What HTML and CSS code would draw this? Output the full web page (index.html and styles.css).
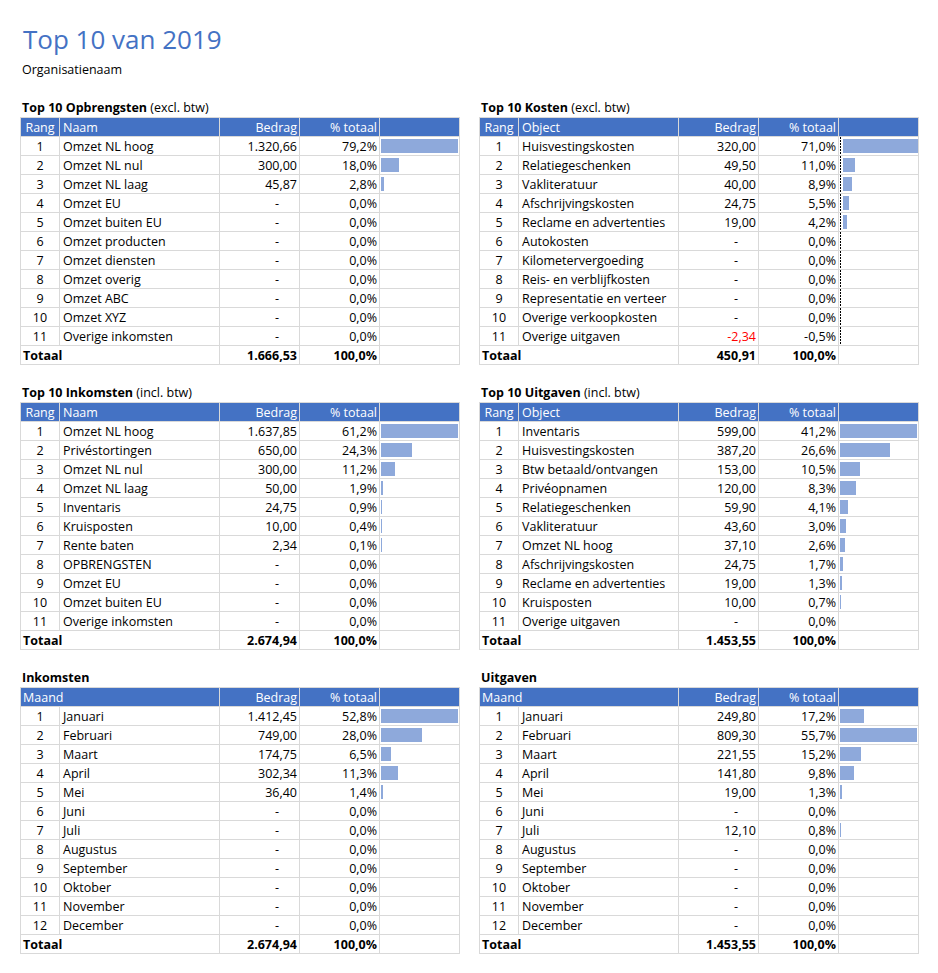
FILE: index.html
```html
<!DOCTYPE html>
<html lang="nl">
<head>
<meta charset="utf-8">
<title>Top 10 van 2019</title>
<link rel="stylesheet" href="styles.css">
</head>
<body>
<div class="page">
  <h1 class="title">Top 10 van 2019</h1>
  <div class="org">Organisatienaam</div>
  <div class="grid">

    <section class="section">
      <h2 class="heading">Top 10 Opbrengsten <span class="sub">(excl. btw)</span></h2>
      <table class="tbl">
        <colgroup><col class="c-rang"><col class="c-naam"><col class="c-num"><col class="c-num"><col class="c-bar"></colgroup>
        <thead><tr><th class="rang">Rang</th><th class="naam">Naam</th><th class="num">Bedrag</th><th class="num">% totaal</th><th></th></tr></thead>
        <tbody>
          <tr><td class="rang">1</td><td class="naam">Omzet NL hoog</td><td class="num">1.320,66</td><td class="num">79,2%</td><td class="barcell"><div class="bar" style="width:77px"></div></td></tr>
          <tr><td class="rang">2</td><td class="naam">Omzet NL nul</td><td class="num">300,00</td><td class="num">18,0%</td><td class="barcell"><div class="bar" style="width:17.5px"></div></td></tr>
          <tr><td class="rang">3</td><td class="naam">Omzet NL laag</td><td class="num">45,87</td><td class="num">2,8%</td><td class="barcell"><div class="bar" style="width:2.7px"></div></td></tr>
          <tr><td class="rang">4</td><td class="naam">Omzet EU</td><td class="num dash">-</td><td class="num">0,0%</td><td class="barcell"></td></tr>
          <tr><td class="rang">5</td><td class="naam">Omzet buiten EU</td><td class="num dash">-</td><td class="num">0,0%</td><td class="barcell"></td></tr>
          <tr><td class="rang">6</td><td class="naam">Omzet producten</td><td class="num dash">-</td><td class="num">0,0%</td><td class="barcell"></td></tr>
          <tr><td class="rang">7</td><td class="naam">Omzet diensten</td><td class="num dash">-</td><td class="num">0,0%</td><td class="barcell"></td></tr>
          <tr><td class="rang">8</td><td class="naam">Omzet overig</td><td class="num dash">-</td><td class="num">0,0%</td><td class="barcell"></td></tr>
          <tr><td class="rang">9</td><td class="naam">Omzet ABC</td><td class="num dash">-</td><td class="num">0,0%</td><td class="barcell"></td></tr>
          <tr><td class="rang">10</td><td class="naam">Omzet XYZ</td><td class="num dash">-</td><td class="num">0,0%</td><td class="barcell"></td></tr>
          <tr><td class="rang">11</td><td class="naam">Overige inkomsten</td><td class="num dash">-</td><td class="num">0,0%</td><td class="barcell"></td></tr>
        </tbody>
        <tfoot><tr><td colspan="2" class="tot-label">Totaal</td><td class="num">1.666,53</td><td class="num">100,0%</td><td></td></tr></tfoot>
      </table>
    </section>

    <section class="section">
      <h2 class="heading">Top 10 Kosten <span class="sub">(excl. btw)</span></h2>
      <table class="tbl">
        <colgroup><col class="c-rang"><col class="c-naam"><col class="c-num"><col class="c-num"><col class="c-bar"></colgroup>
        <thead><tr><th class="rang">Rang</th><th class="naam">Object</th><th class="num">Bedrag</th><th class="num">% totaal</th><th></th></tr></thead>
        <tbody class="axis-body">
          <tr><td class="rang">1</td><td class="naam">Huisvestingskosten</td><td class="num">320,00</td><td class="num">71,0%</td><td class="barcell axis"><div class="axisline"></div><div class="bar" style="width:75px"></div></td></tr>
          <tr><td class="rang">2</td><td class="naam">Relatiegeschenken</td><td class="num">49,50</td><td class="num">11,0%</td><td class="barcell axis"><div class="axisline"></div><div class="bar" style="width:11.6px"></div></td></tr>
          <tr><td class="rang">3</td><td class="naam">Vakliteratuur</td><td class="num">40,00</td><td class="num">8,9%</td><td class="barcell axis"><div class="axisline"></div><div class="bar" style="width:9.4px"></div></td></tr>
          <tr><td class="rang">4</td><td class="naam">Afschrijvingskosten</td><td class="num">24,75</td><td class="num">5,5%</td><td class="barcell axis"><div class="axisline"></div><div class="bar" style="width:5.8px"></div></td></tr>
          <tr><td class="rang">5</td><td class="naam">Reclame en advertenties</td><td class="num">19,00</td><td class="num">4,2%</td><td class="barcell axis"><div class="axisline"></div><div class="bar" style="width:4.4px"></div></td></tr>
          <tr><td class="rang">6</td><td class="naam">Autokosten</td><td class="num dash">-</td><td class="num">0,0%</td><td class="barcell axis"><div class="axisline"></div></td></tr>
          <tr><td class="rang">7</td><td class="naam">Kilometervergoeding</td><td class="num dash">-</td><td class="num">0,0%</td><td class="barcell axis"><div class="axisline"></div></td></tr>
          <tr><td class="rang">8</td><td class="naam">Reis- en verblijfkosten</td><td class="num dash">-</td><td class="num">0,0%</td><td class="barcell axis"><div class="axisline"></div></td></tr>
          <tr><td class="rang">9</td><td class="naam">Representatie en verteer</td><td class="num dash">-</td><td class="num">0,0%</td><td class="barcell axis"><div class="axisline"></div></td></tr>
          <tr><td class="rang">10</td><td class="naam">Overige verkoopkosten</td><td class="num dash">-</td><td class="num">0,0%</td><td class="barcell axis"><div class="axisline"></div></td></tr>
          <tr><td class="rang">11</td><td class="naam">Overige uitgaven</td><td class="num neg">-2,34</td><td class="num">-0,5%</td><td class="barcell axis"><div class="axisline"></div></td></tr>
        </tbody>
        <tfoot><tr><td colspan="2" class="tot-label">Totaal</td><td class="num">450,91</td><td class="num">100,0%</td><td></td></tr></tfoot>
      </table>
    </section>

    <section class="section">
      <h2 class="heading">Top 10 Inkomsten <span class="sub">(incl. btw)</span></h2>
      <table class="tbl">
        <colgroup><col class="c-rang"><col class="c-naam"><col class="c-num"><col class="c-num"><col class="c-bar"></colgroup>
        <thead><tr><th class="rang">Rang</th><th class="naam">Naam</th><th class="num">Bedrag</th><th class="num">% totaal</th><th></th></tr></thead>
        <tbody>
          <tr><td class="rang">1</td><td class="naam">Omzet NL hoog</td><td class="num">1.637,85</td><td class="num">61,2%</td><td class="barcell"><div class="bar" style="width:77px"></div></td></tr>
          <tr><td class="rang">2</td><td class="naam">Privéstortingen</td><td class="num">650,00</td><td class="num">24,3%</td><td class="barcell"><div class="bar" style="width:30.6px"></div></td></tr>
          <tr><td class="rang">3</td><td class="naam">Omzet NL nul</td><td class="num">300,00</td><td class="num">11,2%</td><td class="barcell"><div class="bar" style="width:14.1px"></div></td></tr>
          <tr><td class="rang">4</td><td class="naam">Omzet NL laag</td><td class="num">50,00</td><td class="num">1,9%</td><td class="barcell"><div class="bar" style="width:2.4px"></div></td></tr>
          <tr><td class="rang">5</td><td class="naam">Inventaris</td><td class="num">24,75</td><td class="num">0,9%</td><td class="barcell"><div class="bar" style="width:1.1px"></div></td></tr>
          <tr><td class="rang">6</td><td class="naam">Kruisposten</td><td class="num">10,00</td><td class="num">0,4%</td><td class="barcell"><div class="bar" style="width:0.5px"></div></td></tr>
          <tr><td class="rang">7</td><td class="naam">Rente baten</td><td class="num">2,34</td><td class="num">0,1%</td><td class="barcell"><div class="bar" style="width:0.15px"></div></td></tr>
          <tr><td class="rang">8</td><td class="naam">OPBRENGSTEN</td><td class="num dash">-</td><td class="num">0,0%</td><td class="barcell"></td></tr>
          <tr><td class="rang">9</td><td class="naam">Omzet EU</td><td class="num dash">-</td><td class="num">0,0%</td><td class="barcell"></td></tr>
          <tr><td class="rang">10</td><td class="naam">Omzet buiten EU</td><td class="num dash">-</td><td class="num">0,0%</td><td class="barcell"></td></tr>
          <tr><td class="rang">11</td><td class="naam">Overige inkomsten</td><td class="num dash">-</td><td class="num">0,0%</td><td class="barcell"></td></tr>
        </tbody>
        <tfoot><tr><td colspan="2" class="tot-label">Totaal</td><td class="num">2.674,94</td><td class="num">100,0%</td><td></td></tr></tfoot>
      </table>
    </section>

    <section class="section">
      <h2 class="heading">Top 10 Uitgaven <span class="sub">(incl. btw)</span></h2>
      <table class="tbl">
        <colgroup><col class="c-rang"><col class="c-naam"><col class="c-num"><col class="c-num"><col class="c-bar"></colgroup>
        <thead><tr><th class="rang">Rang</th><th class="naam">Object</th><th class="num">Bedrag</th><th class="num">% totaal</th><th></th></tr></thead>
        <tbody>
          <tr><td class="rang">1</td><td class="naam">Inventaris</td><td class="num">599,00</td><td class="num">41,2%</td><td class="barcell"><div class="bar" style="width:77px"></div></td></tr>
          <tr><td class="rang">2</td><td class="naam">Huisvestingskosten</td><td class="num">387,20</td><td class="num">26,6%</td><td class="barcell"><div class="bar" style="width:49.7px"></div></td></tr>
          <tr><td class="rang">3</td><td class="naam">Btw betaald/ontvangen</td><td class="num">153,00</td><td class="num">10,5%</td><td class="barcell"><div class="bar" style="width:19.6px"></div></td></tr>
          <tr><td class="rang">4</td><td class="naam">Privéopnamen</td><td class="num">120,00</td><td class="num">8,3%</td><td class="barcell"><div class="bar" style="width:15.5px"></div></td></tr>
          <tr><td class="rang">5</td><td class="naam">Relatiegeschenken</td><td class="num">59,90</td><td class="num">4,1%</td><td class="barcell"><div class="bar" style="width:7.7px"></div></td></tr>
          <tr><td class="rang">6</td><td class="naam">Vakliteratuur</td><td class="num">43,60</td><td class="num">3,0%</td><td class="barcell"><div class="bar" style="width:5.6px"></div></td></tr>
          <tr><td class="rang">7</td><td class="naam">Omzet NL hoog</td><td class="num">37,10</td><td class="num">2,6%</td><td class="barcell"><div class="bar" style="width:4.9px"></div></td></tr>
          <tr><td class="rang">8</td><td class="naam">Afschrijvingskosten</td><td class="num">24,75</td><td class="num">1,7%</td><td class="barcell"><div class="bar" style="width:3.2px"></div></td></tr>
          <tr><td class="rang">9</td><td class="naam">Reclame en advertenties</td><td class="num">19,00</td><td class="num">1,3%</td><td class="barcell"><div class="bar" style="width:2.4px"></div></td></tr>
          <tr><td class="rang">10</td><td class="naam">Kruisposten</td><td class="num">10,00</td><td class="num">0,7%</td><td class="barcell"><div class="bar" style="width:1.3px"></div></td></tr>
          <tr><td class="rang">11</td><td class="naam">Overige uitgaven</td><td class="num dash">-</td><td class="num">0,0%</td><td class="barcell"></td></tr>
        </tbody>
        <tfoot><tr><td colspan="2" class="tot-label">Totaal</td><td class="num">1.453,55</td><td class="num">100,0%</td><td></td></tr></tfoot>
      </table>
    </section>

    <section class="section">
      <h2 class="heading">Inkomsten</h2>
      <table class="tbl">
        <colgroup><col class="c-rang"><col class="c-naam"><col class="c-num"><col class="c-num"><col class="c-bar"></colgroup>
        <thead><tr><th colspan="2" class="maand">Maand</th><th class="num">Bedrag</th><th class="num">% totaal</th><th></th></tr></thead>
        <tbody>
          <tr><td class="rang">1</td><td class="naam">Januari</td><td class="num">1.412,45</td><td class="num">52,8%</td><td class="barcell"><div class="bar" style="width:77px"></div></td></tr>
          <tr><td class="rang">2</td><td class="naam">Februari</td><td class="num">749,00</td><td class="num">28,0%</td><td class="barcell"><div class="bar" style="width:40.8px"></div></td></tr>
          <tr><td class="rang">3</td><td class="naam">Maart</td><td class="num">174,75</td><td class="num">6,5%</td><td class="barcell"><div class="bar" style="width:9.5px"></div></td></tr>
          <tr><td class="rang">4</td><td class="naam">April</td><td class="num">302,34</td><td class="num">11,3%</td><td class="barcell"><div class="bar" style="width:16.5px"></div></td></tr>
          <tr><td class="rang">5</td><td class="naam">Mei</td><td class="num">36,40</td><td class="num">1,4%</td><td class="barcell"><div class="bar" style="width:2px"></div></td></tr>
          <tr><td class="rang">6</td><td class="naam">Juni</td><td class="num dash">-</td><td class="num">0,0%</td><td class="barcell"></td></tr>
          <tr><td class="rang">7</td><td class="naam">Juli</td><td class="num dash">-</td><td class="num">0,0%</td><td class="barcell"></td></tr>
          <tr><td class="rang">8</td><td class="naam">Augustus</td><td class="num dash">-</td><td class="num">0,0%</td><td class="barcell"></td></tr>
          <tr><td class="rang">9</td><td class="naam">September</td><td class="num dash">-</td><td class="num">0,0%</td><td class="barcell"></td></tr>
          <tr><td class="rang">10</td><td class="naam">Oktober</td><td class="num dash">-</td><td class="num">0,0%</td><td class="barcell"></td></tr>
          <tr><td class="rang">11</td><td class="naam">November</td><td class="num dash">-</td><td class="num">0,0%</td><td class="barcell"></td></tr>
          <tr><td class="rang">12</td><td class="naam">December</td><td class="num dash">-</td><td class="num">0,0%</td><td class="barcell"></td></tr>
        </tbody>
        <tfoot><tr><td colspan="2" class="tot-label">Totaal</td><td class="num">2.674,94</td><td class="num">100,0%</td><td></td></tr></tfoot>
      </table>
    </section>

    <section class="section">
      <h2 class="heading">Uitgaven</h2>
      <table class="tbl">
        <colgroup><col class="c-rang"><col class="c-naam"><col class="c-num"><col class="c-num"><col class="c-bar"></colgroup>
        <thead><tr><th colspan="2" class="maand">Maand</th><th class="num">Bedrag</th><th class="num">% totaal</th><th></th></tr></thead>
        <tbody>
          <tr><td class="rang">1</td><td class="naam">Januari</td><td class="num">249,80</td><td class="num">17,2%</td><td class="barcell"><div class="bar" style="width:23.8px"></div></td></tr>
          <tr><td class="rang">2</td><td class="naam">Februari</td><td class="num">809,30</td><td class="num">55,7%</td><td class="barcell"><div class="bar" style="width:77px"></div></td></tr>
          <tr><td class="rang">3</td><td class="naam">Maart</td><td class="num">221,55</td><td class="num">15,2%</td><td class="barcell"><div class="bar" style="width:21px"></div></td></tr>
          <tr><td class="rang">4</td><td class="naam">April</td><td class="num">141,80</td><td class="num">9,8%</td><td class="barcell"><div class="bar" style="width:13.5px"></div></td></tr>
          <tr><td class="rang">5</td><td class="naam">Mei</td><td class="num">19,00</td><td class="num">1,3%</td><td class="barcell"><div class="bar" style="width:1.8px"></div></td></tr>
          <tr><td class="rang">6</td><td class="naam">Juni</td><td class="num dash">-</td><td class="num">0,0%</td><td class="barcell"></td></tr>
          <tr><td class="rang">7</td><td class="naam">Juli</td><td class="num">12,10</td><td class="num">0,8%</td><td class="barcell"><div class="bar" style="width:1.1px"></div></td></tr>
          <tr><td class="rang">8</td><td class="naam">Augustus</td><td class="num dash">-</td><td class="num">0,0%</td><td class="barcell"></td></tr>
          <tr><td class="rang">9</td><td class="naam">September</td><td class="num dash">-</td><td class="num">0,0%</td><td class="barcell"></td></tr>
          <tr><td class="rang">10</td><td class="naam">Oktober</td><td class="num dash">-</td><td class="num">0,0%</td><td class="barcell"></td></tr>
          <tr><td class="rang">11</td><td class="naam">November</td><td class="num dash">-</td><td class="num">0,0%</td><td class="barcell"></td></tr>
          <tr><td class="rang">12</td><td class="naam">December</td><td class="num dash">-</td><td class="num">0,0%</td><td class="barcell"></td></tr>
        </tbody>
        <tfoot><tr><td colspan="2" class="tot-label">Totaal</td><td class="num">1.453,55</td><td class="num">100,0%</td><td></td></tr></tfoot>
      </table>
    </section>

  </div>
</div>
</body>
</html>
```

FILE: styles.css
```css
* { box-sizing: border-box; }

body {
  margin: 0;
  background: #fff;
  color: #000;
  font-family: "Open Sans", "Noto Sans", sans-serif;
  font-size: 12.5px;
}

.page {
  padding: 22px 0 0 20px;
}

.title {
  margin: 0 0 0 3px;
  height: 35px;
  line-height: 35px;
  font-size: 26px;
  font-weight: normal;
  color: #4472C4;
}

.org {
  margin: 3px 0 0 2px;
  height: 19px;
  line-height: 19px;
  font-size: 12.5px;
}

.grid {
  display: grid;
  grid-template-columns: 440px 440px;
  column-gap: 19px;
  row-gap: 19px;
  margin-top: 20px;
}

.heading {
  margin: 0 0 0 2px;
  height: 18px;
  line-height: 18px;
  font-size: 12.5px;
  font-weight: bold;
  white-space: nowrap;
}

.heading .sub {
  font-weight: normal;
}

.tbl {
  border-collapse: collapse;
  table-layout: fixed;
  width: 440px;
}

.c-rang { width: 39px; }
.c-naam { width: 160px; }
.c-num { width: 80px; }
.c-bar { width: 80px; }

.tbl th,
.tbl td {
  height: 19px;
  padding: 0 3px;
  border: 1px solid #D9D9D9;
  line-height: 17px;
  white-space: nowrap;
  overflow: hidden;
  vertical-align: middle;
}

.tbl th {
  background: #4472C4;
  color: #fff;
  font-weight: normal;
  text-align: left;
}

.tbl th.rang,
.tbl td.rang {
  text-align: center;
  padding: 0;
}

.tbl th.maand {
  padding-left: 2px;
}

.tbl th.num,
.tbl td.num {
  text-align: right;
  padding-right: 2px;
}

.tbl td.dash {
  padding-right: 20px;
}

.tbl td.neg {
  color: #FF0000;
}

.tbl td.barcell {
  padding: 0 0 0 1px;
}

.bar {
  height: 14px;
  background: #8EA9DB;
}

.axisline {
  float: left;
  width: 1px;
  height: 18px;
  margin-right: 2px;
  background: repeating-linear-gradient(to bottom, #000 0 2px, transparent 2px 3px);
}

.axis .bar {
  float: left;
  margin-top: 2px;
}

.tbl tfoot td {
  border-top: 1px solid #000;
  font-weight: bold;
}

.tbl td.tot-label {
  padding-left: 2px;
}
```
